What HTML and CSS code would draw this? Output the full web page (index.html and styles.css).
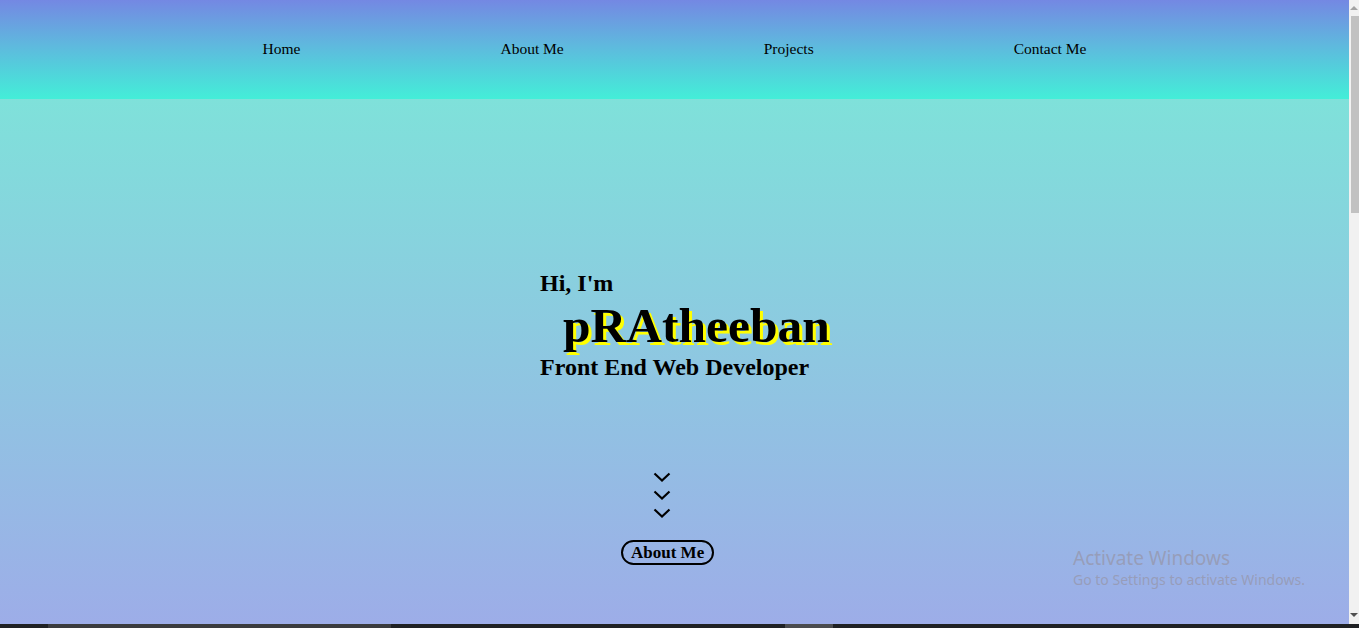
FILE: index.html
```html
<!DOCTYPE html>
<html lang="en">
<head>
<meta charset="utf-8">
<title>pRAtheeban</title>
<link rel="stylesheet" href="styles.css">
</head>
<body>
<div class="screen">
  <div class="window">
    <div class="page">
      <nav class="nav">
        <ul class="nav-list">
          <li><a href="#">Home</a></li>
          <li><a href="#">About Me</a></li>
          <li><a href="#">Projects</a></li>
          <li><a href="#">Contact Me</a></li>
        </ul>
      </nav>
      <main class="hero">
        <div class="intro">
          <h3 class="hi">Hi, I'm</h3>
          <h1 class="name">pRAtheeban</h1>
          <h3 class="role">Front End Web Developer</h3>
        </div>
        <svg class="chevrons" width="18" height="46" viewBox="0 0 18 46" aria-hidden="true">
          <polyline points="1.5,1.5 9,8.5 16.5,1.5" />
          <polyline points="1.5,19.5 9,26.5 16.5,19.5" />
          <polyline points="1.5,37.5 9,44.5 16.5,37.5" />
        </svg>
        <button class="about-btn" type="button">About Me</button>
      </main>
      <div class="watermark">
        <div class="wm-title">Activate Windows</div>
        <div class="wm-sub">Go to Settings to activate Windows.</div>
      </div>
    </div>
    <div class="scrollbar">
      <span class="arrow-up"></span>
      <span class="thumb"></span>
      <span class="track-fill"></span>
      <span class="arrow-down"></span>
    </div>
  </div>
  <div class="taskbar">
    <span class="tb-gap-a"></span>
    <span class="tb-app"></span>
    <span class="tb-gap-b"></span>
    <span class="tb-app2"></span>
  </div>
</div>
</body>
</html>
```

FILE: styles.css
```css
html, body {
  margin: 0;
  padding: 0;
  height: 628px;
  overflow: hidden;
}

.screen {
  display: grid;
  grid-template-rows: 624px 4px;
  width: 1359px;
  height: 628px;
}

.window {
  display: flex;
  flex-direction: row;
  min-height: 0;
}

.page {
  position: relative;
  flex: 1;
  display: flex;
  flex-direction: column;
  font-family: "Liberation Serif", "Times New Roman", serif;
  color: #000;
}

.nav {
  height: 99px;
  flex: 0 0 99px;
  display: flex;
  align-items: center;
  justify-content: center;
  padding-bottom: 2px;
  box-sizing: border-box;
  background: linear-gradient(180deg, #7488e3 0%, #5fb8de 45%, #43eed8 100%);
}

.nav-list {
  list-style: none;
  margin: 0;
  padding: 0;
  display: flex;
  gap: 200px;
}

.nav-list a {
  color: #000;
  text-decoration: none;
  font-size: 15.5px;
}

.hero {
  flex: 1;
  display: flex;
  flex-direction: column;
  align-items: flex-start;
  padding-top: 170px;
  background: linear-gradient(180deg, #7fe1da 0%, #9dade8 100%);
}

.intro {
  margin-left: 540px;
}

.hi, .role {
  margin: 0;
  font-size: 24px;
  font-weight: bold;
  line-height: 28px;
}

.name {
  margin: 1px 0 0 23px;
  font-size: 49.5px;
  font-weight: bold;
  line-height: 55px;
  text-shadow: 3px 3px 0 #ffff00;
}

.chevrons {
  display: block;
  margin: 91px 0 0 653px;
  fill: none;
  stroke: #000;
  stroke-width: 2.2;
}

.about-btn {
  margin: 22px 0 0 621px;
  height: 25px;
  padding: 0 8px;
  border: 2px solid #000;
  border-radius: 13px;
  background: transparent;
  font-family: "Liberation Serif", "Times New Roman", serif;
  font-weight: bold;
  font-size: 17px;
  line-height: 19px;
  color: #000;
}

.watermark {
  position: absolute;
  left: 1073px;
  top: 546px;
  font-family: "Noto Sans", "Open Sans", sans-serif;
  color: rgba(150, 150, 170, 0.75);
}

.wm-title {
  font-size: 19px;
  line-height: 24px;
}

.wm-sub {
  font-size: 14px;
  line-height: 20px;
}

.scrollbar {
  width: 10px;
  flex: 0 0 10px;
  background: #f1f1f1;
  display: flex;
  flex-direction: column;
  align-items: flex-end;
}

.arrow-up {
  width: 0;
  height: 0;
  margin: 6px 1px 0 0;
  border-left: 4px solid transparent;
  border-right: 4px solid transparent;
  border-bottom: 4px solid #a3a3a3;
}

.thumb {
  width: 8px;
  height: 197px;
  margin-top: 6px;
  background: #c1c1c1;
}

.track-fill {
  flex: 1;
}

.arrow-down {
  width: 0;
  height: 0;
  margin: 0 1px 7px 0;
  border-left: 4px solid transparent;
  border-right: 4px solid transparent;
  border-top: 4px solid #505050;
}

.taskbar {
  display: flex;
  background: #1f2124;
}

.tb-gap-a { width: 48px; }
.tb-app { width: 343px; background: #3a3b3e; }
.tb-gap-b { width: 394px; }
.tb-app2 { width: 48px; background: #4b4c4f; }
```
